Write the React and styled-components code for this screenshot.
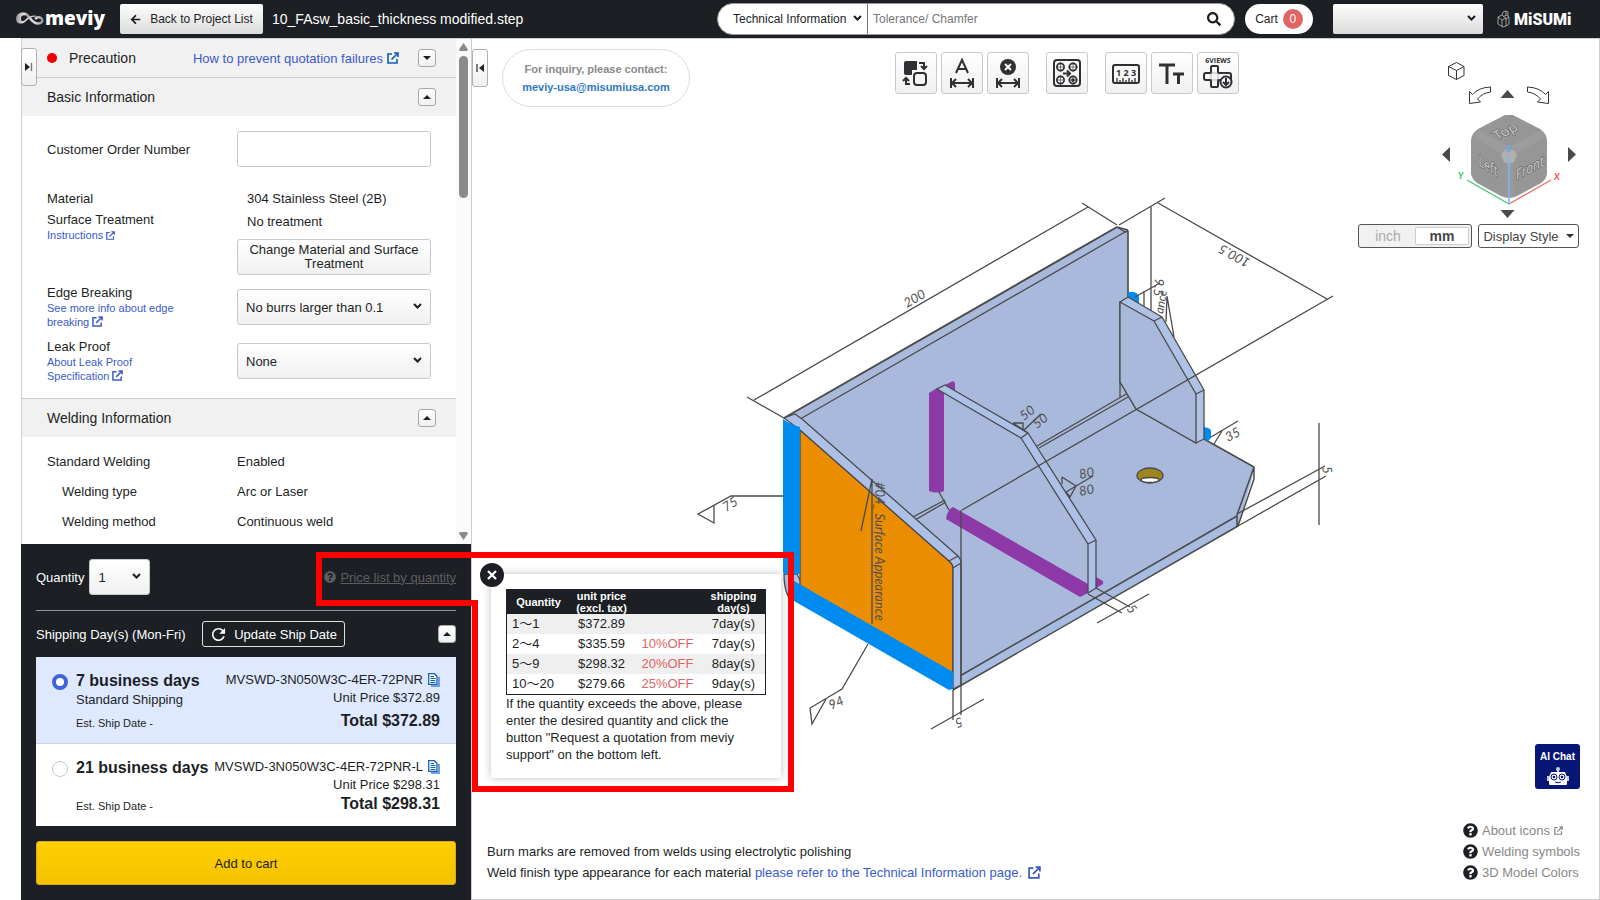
import React, { useState } from "react";
import styled, { createGlobalStyle, css } from "styled-components";
import { FaArrowLeft, FaQuestionCircle, FaSearch } from "react-icons/fa";
import { IoMdRefresh } from "react-icons/io";

const DAYS = [
  {
    id: "d7",
    title: "7 business days",
    sub: "Standard Shipping",
    part: "MVSWD-3N050W3C-4ER-72PNR",
    price: "$372.89",
  },
  {
    id: "d21",
    title: "21 business days",
    part: "MVSWD-3N050W3C-4ER-72PNR-L",
    price: "$298.31",
  },
];

const PRICES = [
  ["1～1", "$372.89", "", "7day(s)"],
  ["2～4", "$335.59", "10%OFF", "7day(s)"],
  ["5～9", "$298.32", "20%OFF", "8day(s)"],
  ["10～20", "$279.66", "25%OFF", "9day(s)"],
];

const WELDING = [
  { label: "Standard Welding", value: "Enabled" },
  { label: "Welding type", value: "Arc or Laser", indent: true },
  { label: "Welding method", value: "Continuous weld", indent: true },
];

function App() {
  return (
    <Page>
      <GlobalStyle />
      <Header />
      <Main>
        <SidePanel />
        <Viewer />
      </Main>
    </Page>
  );
}

export default App;

function Header() {
  return (
    <TopBar>
      <Brand href="#home" aria-label="meviy">
        <svg width="30" height="18" viewBox="0 0 30 18">
          <defs>
            <linearGradient id="loop" x1="0" x2="1">
              <stop offset="0" stopColor="#8d8d90" />
              <stop offset="0.3" stopColor="#e0dadd" />
              <stop offset="0.6" stopColor="#d8d8da" />
              <stop offset="1" stopColor="#98989c" />
            </linearGradient>
          </defs>
          <path
            d="M13 4C10 1 1 2 1 8.500c0 6 6 6 9 3.500 4-4 8-6 13-5-3-3-9-1-12 2-3 3-5 3-5-.5C6 5 9 4.500 12 6z"
            fill="url(#loop)"
          />
          <path
            d="M11 4c4 3 6 9.500 12 9.500 4 0 5-2.500 4-4.500S23 6.500 20 9"
            fill="none"
            stroke="url(#loop)"
            strokeWidth="2.400"
          />
        </svg>
        <BrandName>meviy</BrandName>
      </Brand>
      <BackButton type="button">
        <FaArrowLeft size={11} />
        Back to Project List
      </BackButton>
      <FileName>10_FAsw_basic_thickness modified.step</FileName>
      <Search>
        <KindPicker $inset={5}>
          <select aria-label="Search category">
            <option>Technical Information</option>
          </select>
          <Chevron />
        </KindPicker>
        <SearchInput aria-label="Search" placeholder="Tolerance/ Chamfer" />
        <SearchButton type="button" aria-label="Search">
          <FaSearch size={14} />
        </SearchButton>
      </Search>
      <CartButton type="button">
        Cart <CartCount>0</CartCount>
      </CartButton>
      <AccountPicker $inset={7}>
        <select aria-label="Account">
          <option></option>
        </select>
        <Chevron />
      </AccountPicker>
      <Misumi href="#misumi">
        <svg width="14" height="18" viewBox="0 0 14 18">
          <path
            d="M1 7l4-2 4 3v8l-3 1-5-3zM1 7l4 3 4-2M5 10v7M5 5l1-3 3-1v4l3 2v7l-3 2M9 5L6 7M12 7L9 9M9 1l2 1v4"
            fill="none"
            stroke="#bbb"
            strokeWidth="0.8"
          />
        </svg>
        <span>MiSUMi</span>
      </Misumi>
    </TopBar>
  );
}

function Chevron() {
  return (
    <svg width="9" height="6" viewBox="0 0 9 6">
      <path
        d="M1 1l3.500 3.500L8 1"
        fill="none"
        stroke="#1c1f24"
        strokeWidth="2"
      />
    </svg>
  );
}

function OpenIcon({ size }) {
  return (
    <svg
      width={size}
      height={size}
      viewBox="0 0 12 12"
      fill="none"
      stroke="currentColor"
      strokeWidth="1.600"
    >
      <path d="M5 2H1v9h9V7M7 1h4v4M11 1L4.500 7.500" />
    </svg>
  );
}

function SidePanel() {
  return (
    <Side>
      <Handle type="button" aria-label="Expand panel">
        <svg width="8" height="8" viewBox="0 0 8 8">
          <path d="M0 0l5 4-5 4z" fill="#222" />
          <path d="M6.500 0v8" stroke="#777" strokeWidth="1.4" />
        </svg>
      </Handle>
      <Form>
        <FormBody>
          <SectionHead>
            <Dot />
            <SectionTitle>Precaution</SectionTitle>
            <HelpLink href="#failures">
              How to prevent quotation failures <OpenIcon size={12} />
            </HelpLink>
            <Fold down />
          </SectionHead>
          <SectionHead $line>
            <SectionTitle>Basic Information</SectionTitle>
            <Fold />
          </SectionHead>
          <Fields>
            <Field $after={23} $center>
              <Label htmlFor="order">Customer Order Number</Label>
              <TextBox id="order" />
            </Field>
            <Field $after={4}>
              <Label as="span">Material</Label>
              <Value $inset>304 Stainless Steel (2B)</Value>
            </Field>
            <Field $after={9}>
              <div>
                <Label as="span">Surface Treatment</Label>
                <SmallLink href="#instructions">
                  Instructions <OpenIcon size={9} />
                </SmallLink>
              </div>
              <div>
                <Value $inset $drop>
                  No treatment
                </Value>
                <ChangeButton type="button">
                  Change Material and Surface Treatment
                </ChangeButton>
              </div>
            </Field>
            <Field $after={9}>
              <div>
                <Label htmlFor="edge">Edge Breaking</Label>
                <SmallLink href="#edge">
                  See more info about edge breaking <OpenIcon size={11} />
                </SmallLink>
              </div>
              <FormPicker>
                <select id="edge">
                  <option>No burrs larger than 0.1</option>
                </select>
                <Chevron />
              </FormPicker>
            </Field>
            <Field $after={15}>
              <div>
                <Label htmlFor="leak">Leak Proof</Label>
                <SmallLink href="#leak">
                  About Leak Proof Specification <OpenIcon size={11} />
                </SmallLink>
              </div>
              <FormPicker>
                <select id="leak">
                  <option>None</option>
                </select>
                <Chevron />
              </FormPicker>
            </Field>
          </Fields>
          <SectionHead $line>
            <SectionTitle>Welding Information</SectionTitle>
            <Fold />
          </SectionHead>
          <WeldList>
            {WELDING.map((row) => (
              <WeldRow key={row.label} $indent={row.indent}>
                <dt>{row.label}</dt>
                <dd>{row.value}</dd>
              </WeldRow>
            ))}
          </WeldList>
        </FormBody>
        <ScrollBar>
          <svg width="9" height="8" viewBox="0 0 9 8">
            <path d="M4.500 0L9 6.500 8 8H1L0 6.500z" fill="#8a8a8a" />
          </svg>
          <Thumb />
          <svg width="9" height="8" viewBox="0 0 9 8">
            <path d="M4.500 8L9 1.500 8 0H1L0 1.500z" fill="#8a8a8a" />
          </svg>
        </ScrollBar>
      </Form>
      <Order />
    </Side>
  );
}

function Fold({ down }) {
  return (
    <FoldButton type="button" aria-label={down ? "Open" : "Close"}>
      <svg width="8" height="4" viewBox="0 0 8 4">
        <path d={down ? "M0 0h8L4 4z" : "M4 0l4 4H0z"} fill="#1c1f24" />
      </svg>
    </FoldButton>
  );
}

function Order() {
  const [day, setDay] = useState("d7");

  return (
    <OrderBox>
      <QuantityRow>
        <label htmlFor="qty">Quantity</label>
        <QuantityPicker>
          <select id="qty">
            <option>1</option>
          </select>
          <Chevron />
        </QuantityPicker>
        <PriceLink href="#prices">
          <FaQuestionCircle size={12} />
          <span>Price list by quantity</span>
        </PriceLink>
      </QuantityRow>
      <ShippingRow>
        <span>Shipping Day(s) (Mon-Fri)</span>
        <UpdateButton type="button">
          <IoMdRefresh size={19} />
          Update Ship Date
        </UpdateButton>
        <Fold />
      </ShippingRow>
      {DAYS.map((d) => (
        <DayCard key={d.id} htmlFor={d.id} $on={day === d.id}>
          <Radio
            type="radio"
            name="day"
            id={d.id}
            checked={day === d.id}
            onChange={() => setDay(d.id)}
          />
          <DayInfo>
            <DayTitle>{d.title}</DayTitle>
            {d.sub && <span>{d.sub}</span>}
            <ShipDate>Est. Ship Date -</ShipDate>
          </DayInfo>
          <DayPrice>
            <PartNumber>
              {d.part}
              <CopyIcon />
            </PartNumber>
            <span>Unit Price {d.price}</span>
            <Total>Total {d.price}</Total>
          </DayPrice>
        </DayCard>
      ))}
      <AddButton type="button">Add to cart</AddButton>
      <PricePopup />
      <Marker viewBox="0 0 480 242" width="480" height="242">
        <path
          d="M3 3H475V237H159V51H3z"
          fill="none"
          stroke="#f00"
          strokeWidth="6"
        />
      </Marker>
    </OrderBox>
  );
}

function CopyIcon() {
  return (
    <svg width="12" height="14" viewBox="0 0 12 14">
      <path d="M11 4v9H3" fill="none" stroke="#6ea0dc" strokeWidth="2" />
      <path
        d="M.7.7h5.600L9 3.300v8H.7z"
        fill="#fff"
        stroke="#1061c0"
        strokeWidth="1.3"
      />
      <path
        d="M2.500 3.500H6M2.500 5.500h5M2.500 7.500h5M2.500 9.500h5"
        stroke="#1061c0"
      />
    </svg>
  );
}

function PricePopup() {
  return (
    <Popup role="dialog" aria-label="Price list by quantity">
      <CloseButton type="button" aria-label="Close">
        <svg width="10" height="10" viewBox="0 0 10 10">
          <path d="M1 1l8 8M9 1L1 9" stroke="#fff" strokeWidth="2.200" />
        </svg>
      </CloseButton>
      <PriceTable>
        <thead>
          <tr>
            <th>Quantity</th>
            <th>
              unit price
              <br />
              (excl. tax)
            </th>
            <th></th>
            <th>
              shipping
              <br />
              day(s)
            </th>
          </tr>
        </thead>
        <tbody>
          {PRICES.map((row) => (
            <tr key={row[0]}>
              {row.map((cell, i) => (
                <td key={i}>{cell}</td>
              ))}
            </tr>
          ))}
        </tbody>
      </PriceTable>
      <PopupText>
        If the quantity exceeds the above, please enter the desired quantity and
        click the button "Request a quotation from meviy support" on the bottom
        left.
      </PopupText>
    </Popup>
  );
}

function Viewer() {
  return (
    <Canvas>
      <Model />
      <CanvasTop>
        <Handle type="button" aria-label="Collapse panel">
          <svg width="8" height="8" viewBox="0 0 8 8">
            <path d="M8 0L3 4l5 4z" fill="#222" />
            <path d="M1 0v8" stroke="#222" strokeWidth="1.2" />
          </svg>
        </Handle>
        <Inquiry>
          For inquiry, please contact:
          <a href="mailto:meviy-usa@misumiusa.com">meviy-usa@misumiusa.com</a>
        </Inquiry>
        <Tools />
        <ViewControls>
          <NavCube />
          <ViewOptions>
            <Units>
              <UnitButton type="button">inch</UnitButton>
              <UnitButton type="button" $on>
                mm
              </UnitButton>
            </Units>
            <DisplayButton type="button">
              Display Style
              <svg width="8" height="4" viewBox="0 0 8 4">
                <path d="M0 0h8L4 4z" fill="#333" />
              </svg>
            </DisplayButton>
          </ViewOptions>
        </ViewControls>
      </CanvasTop>
      <CanvasBottom>
        <Notes>
          <p>Burn marks are removed from welds using electrolytic polishing</p>
          <p>
            Weld finish type appearance for each material{" "}
            <a href="#technical">
              please refer to the Technical Information page.{" "}
              <OpenIcon size={13} />
            </a>
          </p>
        </Notes>
        <HelpColumn>
          <ChatButton type="button">
            AI Chat
            <svg width="22" height="20" viewBox="0 0 22 20">
              <circle cx="11" cy="3" r="2" fill="#ccd" />
              <path d="M11 4v4" stroke="#fff" strokeWidth="1.500" />
              <path
                d="M4 6h14l2 5v7q0 1-1 1H3q-1 0-1-1v-7z"
                fill="#fff"
              />
              <path d="M0 10h2v5H0zM20 10h2v5h-2z" fill="#ccd" />
              <circle cx="7" cy="11" r="3" fill="#fff" stroke="#071675" />
              <circle cx="15" cy="11" r="3" fill="#fff" stroke="#071675" />
              <circle cx="7" cy="11" r="1.300" fill="#071675" />
              <circle cx="15" cy="11" r="1.300" fill="#071675" />
              <path d="M8 16q3 1.500 6 0" stroke="#071675" fill="none" />
            </svg>
          </ChatButton>
          <HelpList>
            <a href="#icons">
              <FaQuestionCircle size={15} />
              About icons <OpenIcon size={9} />
            </a>
            <a href="#symbols">
              <FaQuestionCircle size={15} />
              Welding symbols
            </a>
            <a href="#colors">
              <FaQuestionCircle size={15} />
              3D Model Colors
            </a>
          </HelpList>
        </HelpColumn>
      </CanvasBottom>
    </Canvas>
  );
}

// horizontal double arrow between two stops, shared by the dimension tools
const SPAN = "M9 25v10M31 25v10M10 30h20M14 26l-4 4 4 4M26 26l4 4-4 4";

function Tools() {
  return (
    <Toolbar>
      <ToolGroup>
        <Tool type="button" aria-label="Swap">
          <Icon>
            <path
              d="M10 8h11v9h-5v5h-6q-2 0-2-2V10q0-2 2-2z"
              fill="#2e3033"
              stroke="none"
            />
            <rect x="18" y="20" width="12" height="12" rx="3" />
            <path d="M23 10h5v6M25 13l3 3 3-3M14 31h-4v-6M7 28l3-3 3 3" />
          </Icon>
        </Tool>
        <Tool type="button" aria-label="Dimension text">
          <Icon>
            <path d="M14 20l6-13 6 13M16 16h8" />
            <path d={SPAN} />
          </Icon>
        </Tool>
        <Tool type="button" aria-label="Delete dimension">
          <Icon>
            <circle cx="20" cy="14" r="8" fill="#2e3033" stroke="none" />
            <path d="M17 11l6 6M23 11l-6 6" stroke="#fff" />
            <path d={SPAN} />
          </Icon>
        </Tool>
      </ToolGroup>
      <ToolGroup>
        <Tool type="button" aria-label="Hole settings">
          <Icon>
            <rect x="7" y="7" width="26" height="26" rx="3" />
            <g strokeWidth="1.700">
              <circle cx="13.500" cy="14" r="3.600" />
              <circle cx="26" cy="14" r="3.600" />
              <circle cx="13.500" cy="27" r="3.600" />
              <circle cx="26" cy="27" r="3.600" />
              <circle cx="26" cy="27" r="1" fill="#2e3033" />
              <path
                d="M13.500 9v10M9 14h9M26 9v10M21 14h10M13.500 22v10M9 27h9M26 22v10M21 27h10"
                strokeWidth="0.6"
              />
            </g>
            <path d="M16 20.500h7M20 17.500l3 3-3 3" />
          </Icon>
        </Tool>
      </ToolGroup>
      <ToolGroup>
        <Tool type="button" aria-label="Measure">
          <Icon>
            <rect x="7" y="12" width="26" height="18" rx="2" />
            <path
              d="M11 29v-4M14 29v-2M17 29v-4M20 29v-2M23 29v-4M26 29v-2M29 29v-4"
              strokeWidth="1.300"
            />
            <IconText x="20" y="23" size={9}>
              1 2 3
            </IconText>
          </Icon>
        </Tool>
        <Tool type="button" aria-label="Text size">
          <Icon>
            <path d="M7 12h16M15 12v19M21 21h11M26.500 21v10" strokeWidth="3" />
          </Icon>
        </Tool>
        <Tool type="button" aria-label="6 views">
          <Icon>
            <IconText x="20" y="10" size={7}>
              6VIEWS
            </IconText>
            <path d="M14 13h5q1 0 1 1v6h11q2 0 2 2v5H20v6q0 1-1 1h-5q-1 0-1-1v-6H8q-2 0-2-2v-3q0-2 2-2h5v-6q0-1 1-1z" />
            <path d="M13 20h7v7h-7zM26 20v6" stroke="#aaa" strokeWidth="0.8" />
            <circle cx="28" cy="29" r="5.500" fill="#fbfbfb" />
            <path d="M28 25v7M25 29l3 3 3-3" />
          </Icon>
        </Tool>
      </ToolGroup>
    </Toolbar>
  );
}

function Icon({ children }) {
  return (
    <svg
      width="40"
      height="40"
      viewBox="0 0 40 40"
      fill="none"
      stroke="#2e3033"
      strokeWidth="2"
    >
      {children}
    </svg>
  );
}

function IconText({ x, y, size, children }) {
  return (
    <text
      x={x}
      y={y}
      fontSize={size}
      fontWeight="bold"
      fontFamily="Open Sans, sans-serif"
      textAnchor="middle"
      fill="#2e3033"
      stroke="none"
    >
      {children}
    </text>
  );
}

function NavCube() {
  return (
    <svg width="143" height="166" viewBox="1436 58 143 166">
      <g fill="none" stroke="#333">
        <path d="M1448.500 66.500l8-4 7.500 4v9l-7.500 4-8-4zM1448.500 66.500l8 4 7.500-4M1456.500 70.500v9" />
        <path d="M1490.500 87v5q-8 1-13 7l3 3-11 1.500v-12l3 3q6-7 18-7.500z" />
        <path d="M1527.500 87v5q8 1 13 7l-3 3 11 1.500v-12l-3 3q-6-7-18-7.500z" />
      </g>
      <g fill="#4a4a4a">
        <path d="M1507.500 90l7 8h-14zM1507.500 218l7-8h-14zM1442 154.500l8-7.500v15zM1576 154.500l-8-7.500v15z" />
      </g>
      <path
        d="M1505 115h8l27 14q7 5 7 12v33q-1 6-6 9l-24 13q-4 2-8 2t-8-2l-24-13q-5-4-6-9v-33q0-7 7-12z"
        fill="#969696"
      />
      <path
        d="M1473 137l5-7 27 15 4 5 4-5 28-15 5 7-30 17-3 9h-8l-3-9z"
        fill="#9c9c9c"
      />
      <path d="M1505 162h8v35h-8z" fill="#9a9a9a" />
      <path d="M1505 150h8l4 5-3 7-5 2-5-2-3-7z" fill="#b0b0b0" />
      <g
        fontFamily="Noto Sans, sans-serif"
        fontSize="15"
        fill="#cacaca"
        stroke="#666"
        strokeWidth="1.400"
        paintOrder="stroke"
        textAnchor="middle"
      >
        <text transform="matrix(.87 -.4 .5 .7 1508 135)">Top</text>
        <text transform="matrix(.7 .42 0 1 1488 171)">Left</text>
        <text transform="matrix(.75 -.4 0 1 1530 173)">Front</text>
      </g>
      <path d="M1509 204l-42-24" stroke="#3fca64" strokeWidth="1.300" />
      <path d="M1509 204l42-24" stroke="#f26a6a" strokeWidth="1.300" />
      <path d="M1509 204v-48" stroke="#7ab5f2" strokeWidth="1.600" />
      <g
        fontFamily="Lato, sans-serif"
        fontSize="9"
        fontStyle="italic"
        fontWeight="bold"
      >
        <text x="1458" y="179" fill="#2cc555">
          Y
        </text>
        <text x="1554" y="180" fill="#f25050">
          X
        </text>
        <text x="1506" y="152" fill="#62a8f5">
          Z
        </text>
      </g>
    </svg>
  );
}

// welded bracket with its dimension lines and weld symbols
function Model() {
  return (
    <ModelSvg viewBox="472 39 1127 860">
      <g stroke="#4a4a4a" strokeWidth="1.300" strokeLinejoin="round">
        <path
          d="M784 418L1117 227l11 3v68l76 92v49l50 28-17 59L953 690V560z"
          fill="#a8b9db"
          stroke="none"
        />
        <path d="M1117 227l-333 191" strokeWidth="2" fill="none" />
        <path d="M1117 227l8 5-330 190" fill="none" />
        <path d="M1125 232l3-1v67" fill="none" strokeWidth="1.600" />
        <path d="M1117 227l11 3" fill="none" />
        <path
          d="M1254 467l-2 12-14 47-285 163v-9l284-164z"
          fill="#a8bbe0"
          stroke="none"
        />
        <path
          d="M1204 439l50 28-17 48v11M1254 467v12l-16 47L953 690M1237 516L953 680"
          fill="none"
          strokeWidth="1.500"
        />
        <path
          d="M1128 393L1037 446M1128 397l-89 51M945 500l-32 17M946 502l-31 18"
          fill="none"
        />

        {/* right rib */}
        <path
          d="M1128 292h6q5 2 5 5v8l-11-6zM1204 427q7 1 7 4v7l-3 3-4-2z"
          fill="#008bf0"
          stroke="none"
        />
        <path
          d="M1120 302l8-5 34 20 42 73v49l-8 4-60-34-16-27z"
          fill="#aec1e6"
        />
        <path
          d="M1120 302l34 19 42 73v49l-60-34-16-27z"
          fill="#a8b9db"
        />
        <path d="M1154 321l8-4M1196 394l8-4M1120 382v15" fill="none" />

        {/* hole in the base */}
        <ellipse cx="1150" cy="475.500" rx="13" ry="7.500" fill="#9c8622" />
        <ellipse cx="1150" cy="480" rx="9" ry="2.500" fill="#fff" />

        {/* middle rib */}
        <path
          d="M929 393l8-5 8-3 8-4 2 2v8l-11 2v98q-7 3-15 0z"
          fill="#8d39a7"
          stroke="none"
        />
        <path
          d="M953 507l135 77 8-7 7 4v3l-15 9-8 4-134-78q1-9 7-12z"
          fill="#8d39a7"
          stroke="none"
        />
        <path
          d="M937 389l8-4 83 48 68 107v48l-8 5v-49l-67-106z"
          fill="#adc1e8"
        />
        <path d="M1021 438l7-5M1088 544l8-4M939 492l10 18" fill="none" />

        {/* left plate */}
        <path d="M784 574h13l6 12-15 10q-4-8-4-22z" fill="#adc1e8" />
        <path d="M800 430l149 131q4 3 4 7v112l-153-95z" fill="#eb8d00" />
        <path
          d="M784 418l11-4 7 5 156 137q3 3 3 7v122l-8 4V568q0-4-4-7L800 430z"
          fill="#adc1e8"
        />
        <path d="M949 561l9-5M953 568l8-5" fill="none" />
        <path
          d="M783 419q8 6 17 8v147q-8 2-17-1z"
          fill="#008bf0"
          stroke="none"
        />
        <path
          d="M794 581l159 91v17l-4 1-155-89z"
          fill="#008bf0"
          stroke="none"
        />
        <path d="M961 510v205M953 690v30" fill="none" />
      </g>

      <g stroke="#4a4a4a" strokeWidth="1.300" fill="none">
        <path d="M747 397l37 21M754 400L1088 207M1082 203l35 22" />
        <path d="M1119 225l46-27M1158 203l169 96M1333 296L962 510" />
        <path d="M1151 207v103M1144 291v15M1135 297l25-14" />
        <path d="M1167 296l-1 26M1167 296l7 41" />
        <path d="M1211 437l27-16M1222 431l-8 13" />
        <path d="M1319 423v102M1237 514l88-48M1238 526l88-50" />
        <path d="M1024 430l17-16M1013 423h10v7l-10-7 15 10" />
        <path d="M1066 492l27-16M1062 477l14 9-6 11-4-5M1062 477v7" />
        <path d="M783 496h-52l-33 18 16 9v-18" />
        <path d="M868 644l-26 45-32 19 2 16 14-25" />
        <path d="M931 729l53-30M1097 623l52-29M1088 594l34 19M1096 588l34 19" />
        <path d="M872 479v145M872 479l-11 52" />
      </g>

      <g
        fontFamily="Lato, sans-serif"
        fontSize="13"
        fontStyle="italic"
        fill="#505050"
      >
        <text transform="translate(907 308) rotate(-30)">200</text>
        <text transform="translate(1251 260) rotate(209)">100.5</text>
        <text transform="translate(1024 421) rotate(-38)">50</text>
        <text transform="translate(1037 429) rotate(-38)">50</text>
        <text transform="translate(1080 479) rotate(-12)">80</text>
        <text transform="translate(1080 496) rotate(-12)">80</text>
        <text transform="translate(1228 442) rotate(-28)">35</text>
        <text transform="translate(726 512) rotate(-32)">75</text>
        <text transform="translate(831 710) rotate(-24)">94</text>
        <text transform="translate(1322 467) rotate(80)">5</text>
        <text transform="translate(961 717) rotate(160)">5</text>
        <text transform="translate(1126 609) rotate(50)">5</text>
        <text transform="translate(1155 278) rotate(95)">9.5</text>
        <text transform="translate(1163 314) rotate(-80)" fontSize="12">
          ance
        </text>
        <text transform="translate(875 482) rotate(90)">
          #04_ Surface Appearance
        </text>
      </g>
    </ModelSvg>
  );
}

const GlobalStyle = createGlobalStyle`
  * {
    box-sizing: border-box;
  }

  body {
    margin: 0;
    font-family: "Liberation Sans", Arial, "Noto Sans CJK JP", sans-serif;
    font-size: 13px;
    line-height: 17px;
    color: #1c1f24;
    background: #fff;
  }

  button, input, select {
    font: inherit;
    color: inherit;
  }

  button {
    padding: 0;
    cursor: pointer;
  }

  a {
    color: #3a5acb;
    text-decoration: none;
  }

  svg {
    flex-shrink: 0;
  }
`;

const Page = styled.div`
  display: flex;
  flex-direction: column;
  height: 100vh;
  overflow: hidden;
`;

const TopBar = styled.header`
  display: flex;
  align-items: center;
  height: 38px;
  flex-shrink: 0;
  padding: 0 28px 0 15px;
  background: #1c1f24;
  color: #fff;
`;

const Brand = styled.a`
  display: flex;
  align-items: center;
  width: 90px;
  margin-right: 15px;
  color: #fff;
`;

const BrandName = styled.span`
  font-family: "Open Sans", sans-serif;
  font-size: 19px;
  font-weight: 800;
  line-height: 22px;
  padding-bottom: 3px;
`;

const grey = css`
  border: 1px solid #c8c8cf;
  border-radius: 3px;
  background: linear-gradient(#fff, #f0f0f0);
`;

const BackButton = styled.button`
  display: flex;
  align-items: center;
  justify-content: center;
  gap: 9px;
  width: 143px;
  height: 30px;
  border: 0;
  border-radius: 2px;
  background: linear-gradient(#fdfdfd, #dcdcdc);
  color: #1c1f24;
  font-size: 12px;
`;

const FileName = styled.span`
  margin-left: 9px;
  font-size: 14px;
`;

/* select with its own chevron laid over the right end */
const Picker = styled.div`
  position: relative;
  color: #1c1f24;

  select {
    appearance: none;
    display: block;
    width: 100%;
    height: 100%;
    padding: 0 20px 0 8px;
    border: 0;
    background: none;
  }

  svg {
    position: absolute;
    top: calc(50% - 4px);
    right: ${(props) => props.$inset || 8}px;
    pointer-events: none;
  }
`;

const Search = styled.div`
  display: flex;
  align-items: center;
  width: 518px;
  height: 32px;
  margin-left: auto;
  border: 1px solid #999;
  border-radius: 16px;
  background: #fff;
  color: #1c1f24;
  font-size: 12px;
  overflow: hidden;
`;

const KindPicker = styled(Picker)`
  width: 150px;
  height: 100%;
  border-right: 1px solid #777;

  select {
    padding-left: 15px;
  }
`;

const SearchInput = styled.input`
  flex: 1;
  height: 100%;
  padding: 0 5px;
  border: 0;
  background: none;

  &::placeholder {
    color: #777;
  }
`;

const SearchButton = styled.button`
  display: flex;
  padding: 0 13px;
  border: 0;
  background: none;
`;

const CartButton = styled.button`
  display: flex;
  align-items: center;
  justify-content: center;
  gap: 5px;
  width: 68px;
  height: 30px;
  margin: 0 20px 0 10px;
  border: 0;
  border-radius: 15px;
  background: #fff;
  color: #1c1f24;
  font-size: 12px;
`;

const CartCount = styled.span`
  width: 20px;
  border-radius: 10px;
  background: #e06464;
  color: #fff;
  line-height: 20px;
`;

const AccountPicker = styled(Picker)`
  width: 150px;
  height: 30px;
  border-radius: 2px;
  background: linear-gradient(#fdfdfd, #dcdcdc);
`;

const Misumi = styled.a`
  display: flex;
  align-items: center;
  gap: 3px;
  width: 75px;
  margin-left: 14px;
  color: #fff;
  font-family: Roboto, sans-serif;
  font-size: 16px;
  font-weight: 900;
`;

const Main = styled.main`
  display: flex;
  flex: 1;
  min-height: 0;
  padding-left: 21px;
`;

const Side = styled.aside`
  position: relative;
  z-index: 1;
  display: flex;
  flex-direction: column;
  width: 450px;
  flex-shrink: 0;

  /* the handle lies over the form's left edge */
  > button {
    position: absolute;
    z-index: 1;
    top: 10px;
    left: 0;
  }
`;

const Handle = styled.button`
  ${grey}
  display: flex;
  align-items: center;
  justify-content: center;
  width: 16px;
  height: 38px;
  border-color: #b0b0b4;
`;

const Form = styled.div`
  display: flex;
  flex: 1;
  min-height: 0;
  border-top: 1px solid #ccccd2;
  border-left: 1px solid #ccccd2;
`;

const FormBody = styled.div`
  flex: 1;
  overflow: hidden;
`;

const SectionHead = styled.div`
  display: flex;
  align-items: center;
  height: ${(props) => (props.$line ? "39px" : "38px")};
  padding: 0 20px 0 25px;
  border-top: ${(props) => (props.$line ? "1px solid #ccccd2" : "0")};
  background: #f1f1f1;
`;

const Dot = styled.span`
  width: 10px;
  height: 10px;
  margin-right: 12px;
  border-radius: 50%;
  background: #ee0000;
`;

const SectionTitle = styled.h2`
  margin: 0 auto 0 0;
  font-size: 14px;
  font-weight: 400;
`;

const HelpLink = styled.a`
  display: flex;
  align-items: center;
  gap: 4px;
  margin-right: 19px;

  svg {
    color: #0a5fb4;
  }
`;

const FoldButton = styled.button`
  ${grey}
  display: flex;
  align-items: center;
  justify-content: center;
  width: 18px;
  height: 18px;
  border-color: #a8a8ac;
`;

const Fields = styled.div`
  padding: 15px 25px 0;
`;

const Field = styled.div`
  display: grid;
  grid-template-columns: 190px 194px;
  align-items: ${(props) => (props.$center ? "center" : "start")};
  margin-bottom: ${(props) => props.$after}px;
`;

const Label = styled.label`
  display: block;
`;

const Value = styled.div`
  padding-left: ${(props) => (props.$inset ? "10px" : "0")};
  padding-top: ${(props) => (props.$drop ? "2px" : "0")};
`;

const SmallLink = styled.a`
  display: block;
  max-width: 130px;
  font-size: 11px;
  line-height: 14px;

  svg {
    vertical-align: -1px;
  }
`;

const TextBox = styled.input`
  width: 100%;
  height: 36px;
  padding: 0 8px;
  border: 1px solid #c8c8cf;
  border-radius: 3px;
`;

const ChangeButton = styled.button`
  ${grey}
  width: 100%;
  height: 36px;
  margin-top: 9px;
  line-height: 14px;
`;

const FormPicker = styled(Picker)`
  ${grey}
  height: 36px;
  margin-top: 5px;
`;

const WeldList = styled.dl`
  margin: 0;
  padding: 10px 25px;
`;

const WeldRow = styled.div`
  display: grid;
  grid-template-columns: 190px 1fr;
  line-height: 30px;

  dt {
    padding-left: ${(props) => (props.$indent ? "15px" : "0")};
  }

  dd {
    margin: 0;
  }
`;

const ScrollBar = styled.div`
  display: flex;
  flex-direction: column;
  align-items: center;
  width: 15px;
  padding: 4px 0;
  background: #fafafa;

  svg:last-child {
    margin-top: auto;
  }
`;

const Thumb = styled.div`
  width: 9px;
  height: 142px;
  margin-top: 5px;
  border-radius: 5px;
  background: #8a8a8a;
`;

const OrderBox = styled.section`
  position: relative;
  padding: 15px;
  background: #1c1f24;
  color: #fff;
`;

const QuantityRow = styled.div`
  display: flex;
  align-items: center;
  gap: 5px;
  padding-bottom: 15px;
  border-bottom: 1px solid #8e9093;
`;

const QuantityPicker = styled(Picker)`
  ${grey}
  width: 61px;
  height: 36px;
`;

const PriceLink = styled.a`
  display: flex;
  align-items: center;
  gap: 4px;
  margin-left: auto;
  color: #5c5e61;

  span {
    text-decoration: underline;
  }
`;

const ShippingRow = styled.div`
  display: flex;
  align-items: center;
  gap: 16px;
  padding: 10px 0;

  > :last-child {
    margin-left: auto;
  }
`;

const UpdateButton = styled.button`
  display: flex;
  align-items: center;
  justify-content: center;
  gap: 6px;
  width: 143px;
  height: 26px;
  border: 1px solid #e0e0e0;
  border-radius: 3px;
  background: none;
  color: #fff;
`;

const DayCard = styled.label`
  display: flex;
  align-items: stretch;
  padding: 14px 16px 12px;
  background: ${(props) => (props.$on ? "#dee9ff" : "#fff")};
  color: #1c1f24;
  cursor: pointer;

  & + & {
    border-top: 1px solid #ccd3dd;
  }
`;

const Radio = styled.input`
  appearance: none;
  width: 16px;
  height: 16px;
  margin: 3px 8px 0 0;
  border: 1px solid #c8c8cf;
  border-radius: 50%;
  background: #fff;

  &:checked {
    border: 4px solid #3f63dc;
  }
`;

const DayInfo = styled.div`
  display: flex;
  flex-direction: column;
  white-space: nowrap;
`;

const DayTitle = styled.strong`
  font-size: 16px;
  line-height: 20px;
`;

const ShipDate = styled.span`
  margin-top: auto;
  padding-top: 7px;
  font-size: 11px;
  line-height: 16px;
`;

const DayPrice = styled.div`
  display: flex;
  flex-direction: column;
  align-items: flex-end;
  margin-left: auto;
  white-space: nowrap;
`;

const PartNumber = styled.span`
  display: flex;
  align-items: center;
  gap: 5px;
  line-height: 18px;
`;

const Total = styled.strong`
  margin-top: auto;
  font-size: 16px;
  line-height: 21px;
`;

const AddButton = styled.button`
  width: 100%;
  height: 44px;
  margin-top: 15px;
  border: 1px solid #dda52a;
  border-radius: 3px;
  background: linear-gradient(#ffcf00, #f3c200);
  color: #1c1f24;
`;

/* opens over the viewer, beside the price link */
const Popup = styled.div`
  position: absolute;
  top: 30px;
  left: 470px;
  width: 290px;
  padding: 15px;
  background: #fff;
  color: #1c1f24;
  box-shadow: 0 0 8px rgba(0, 0, 0, 0.25);
`;

const CloseButton = styled.button`
  position: absolute;
  top: -11px;
  left: -11px;
  display: flex;
  align-items: center;
  justify-content: center;
  width: 24px;
  height: 24px;
  border: 0;
  border-radius: 50%;
  background: #1c1f24;
`;

const Marker = styled.svg`
  position: absolute;
  top: 8px;
  left: 295px;
  pointer-events: none;
`;

const PriceTable = styled.table`
  width: 100%;
  border: 1px solid #1c1f24;
  border-top: 0;
  border-spacing: 0;

  th {
    height: 25px;
    padding: 0;
    background: #1c1f24;
    color: #fff;
    font-size: 11px;
    line-height: 12px;
  }

  td {
    height: 20px;
    padding: 0;
    text-align: center;
    line-height: 20px;
  }

  td:first-child {
    padding-left: 5px;
    text-align: left;
  }

  td:nth-child(3) {
    color: #e06464;
  }

  tbody tr:nth-child(odd) {
    background: #efefef;
  }

  th:nth-child(1),
  th:nth-child(2),
  th:nth-child(4) {
    width: 63px;
  }
`;

const PopupText = styled.p`
  margin: 0;
`;

const Canvas = styled.section`
  position: relative;
  display: flex;
  flex: 1;
  flex-direction: column;
  justify-content: space-between;
  min-width: 0;
  border: 1px solid #ccccd2;
`;

/* drawing surface under the controls */
const ModelSvg = styled.svg`
  position: absolute;
  inset: 0;
  width: 100%;
  height: 100%;
`;

const CanvasTop = styled.div`
  position: relative;
  display: flex;
  align-items: flex-start;
  padding: 10px 20px 0 0;
`;

const Inquiry = styled.div`
  display: flex;
  flex-direction: column;
  align-items: center;
  justify-content: center;
  width: 188px;
  height: 58px;
  margin-left: 14px;
  border: 1px solid #ddd;
  border-radius: 29px;
  background: #fff;
  color: #8a8a8a;
  font-size: 11px;
  font-weight: 700;
  line-height: 18px;
  white-space: nowrap;

  a {
    color: #2f79c2;
  }
`;

const Toolbar = styled.div`
  display: flex;
  gap: 17px;
  margin: 3px 0 0 205px;
`;

const ToolGroup = styled.div`
  display: flex;
  gap: 4px;
`;

const Tool = styled.button`
  ${grey}
  display: flex;
  width: 42px;
  height: 42px;
`;

const ViewControls = styled.div`
  display: flex;
  flex-direction: column;
  align-items: flex-end;
  margin: 9px 0 0 auto;
`;

const ViewOptions = styled.div`
  display: flex;
  gap: 6px;
`;

const Units = styled.div`
  display: flex;
  width: 114px;
  height: 24px;
  padding: 2px;
  border: 1px solid #555;
  border-radius: 3px;
  background: #f1f1f1;
`;

const UnitButton = styled.button`
  flex: 1;
  border: 1px solid ${(props) => (props.$on ? "#ccc" : "transparent")};
  border-radius: 2px;
  background: ${(props) => (props.$on ? "#fff" : "none")};
  color: ${(props) => (props.$on ? "#444" : "#aaa")};
  font-size: 14px;
  font-weight: ${(props) => (props.$on ? 700 : 400)};
  line-height: 16px;
`;

const DisplayButton = styled.button`
  display: flex;
  align-items: center;
  justify-content: center;
  gap: 7px;
  width: 101px;
  height: 24px;
  border: 1px solid #555;
  border-radius: 3px;
  background: #fff;
  color: #444;
`;

const CanvasBottom = styled.div`
  position: relative;
  display: flex;
  align-items: flex-end;
  justify-content: space-between;
  padding: 0 19px 16px 15px;
`;

const Notes = styled.div`
  p {
    margin: 0;
    line-height: 21px;
  }

  svg {
    margin-left: 2px;
    vertical-align: -2px;
  }
`;

const HelpColumn = styled.div`
  display: flex;
  flex-direction: column;
  align-items: flex-end;
  gap: 31px;
`;

const ChatButton = styled.button`
  display: flex;
  flex-direction: column;
  align-items: center;
  justify-content: center;
  gap: 1px;
  width: 45px;
  height: 45px;
  border: 0;
  border-radius: 3px;
  background: #071675;
  color: #fff;
  font-size: 10px;
  font-weight: 700;
  white-space: nowrap;
`;

const HelpList = styled.nav`
  display: flex;
  flex-direction: column;

  a {
    display: flex;
    align-items: center;
    gap: 4px;
    color: #888;
    line-height: 21px;
  }

  svg:first-child {
    color: #1c1f24;
  }
`;
